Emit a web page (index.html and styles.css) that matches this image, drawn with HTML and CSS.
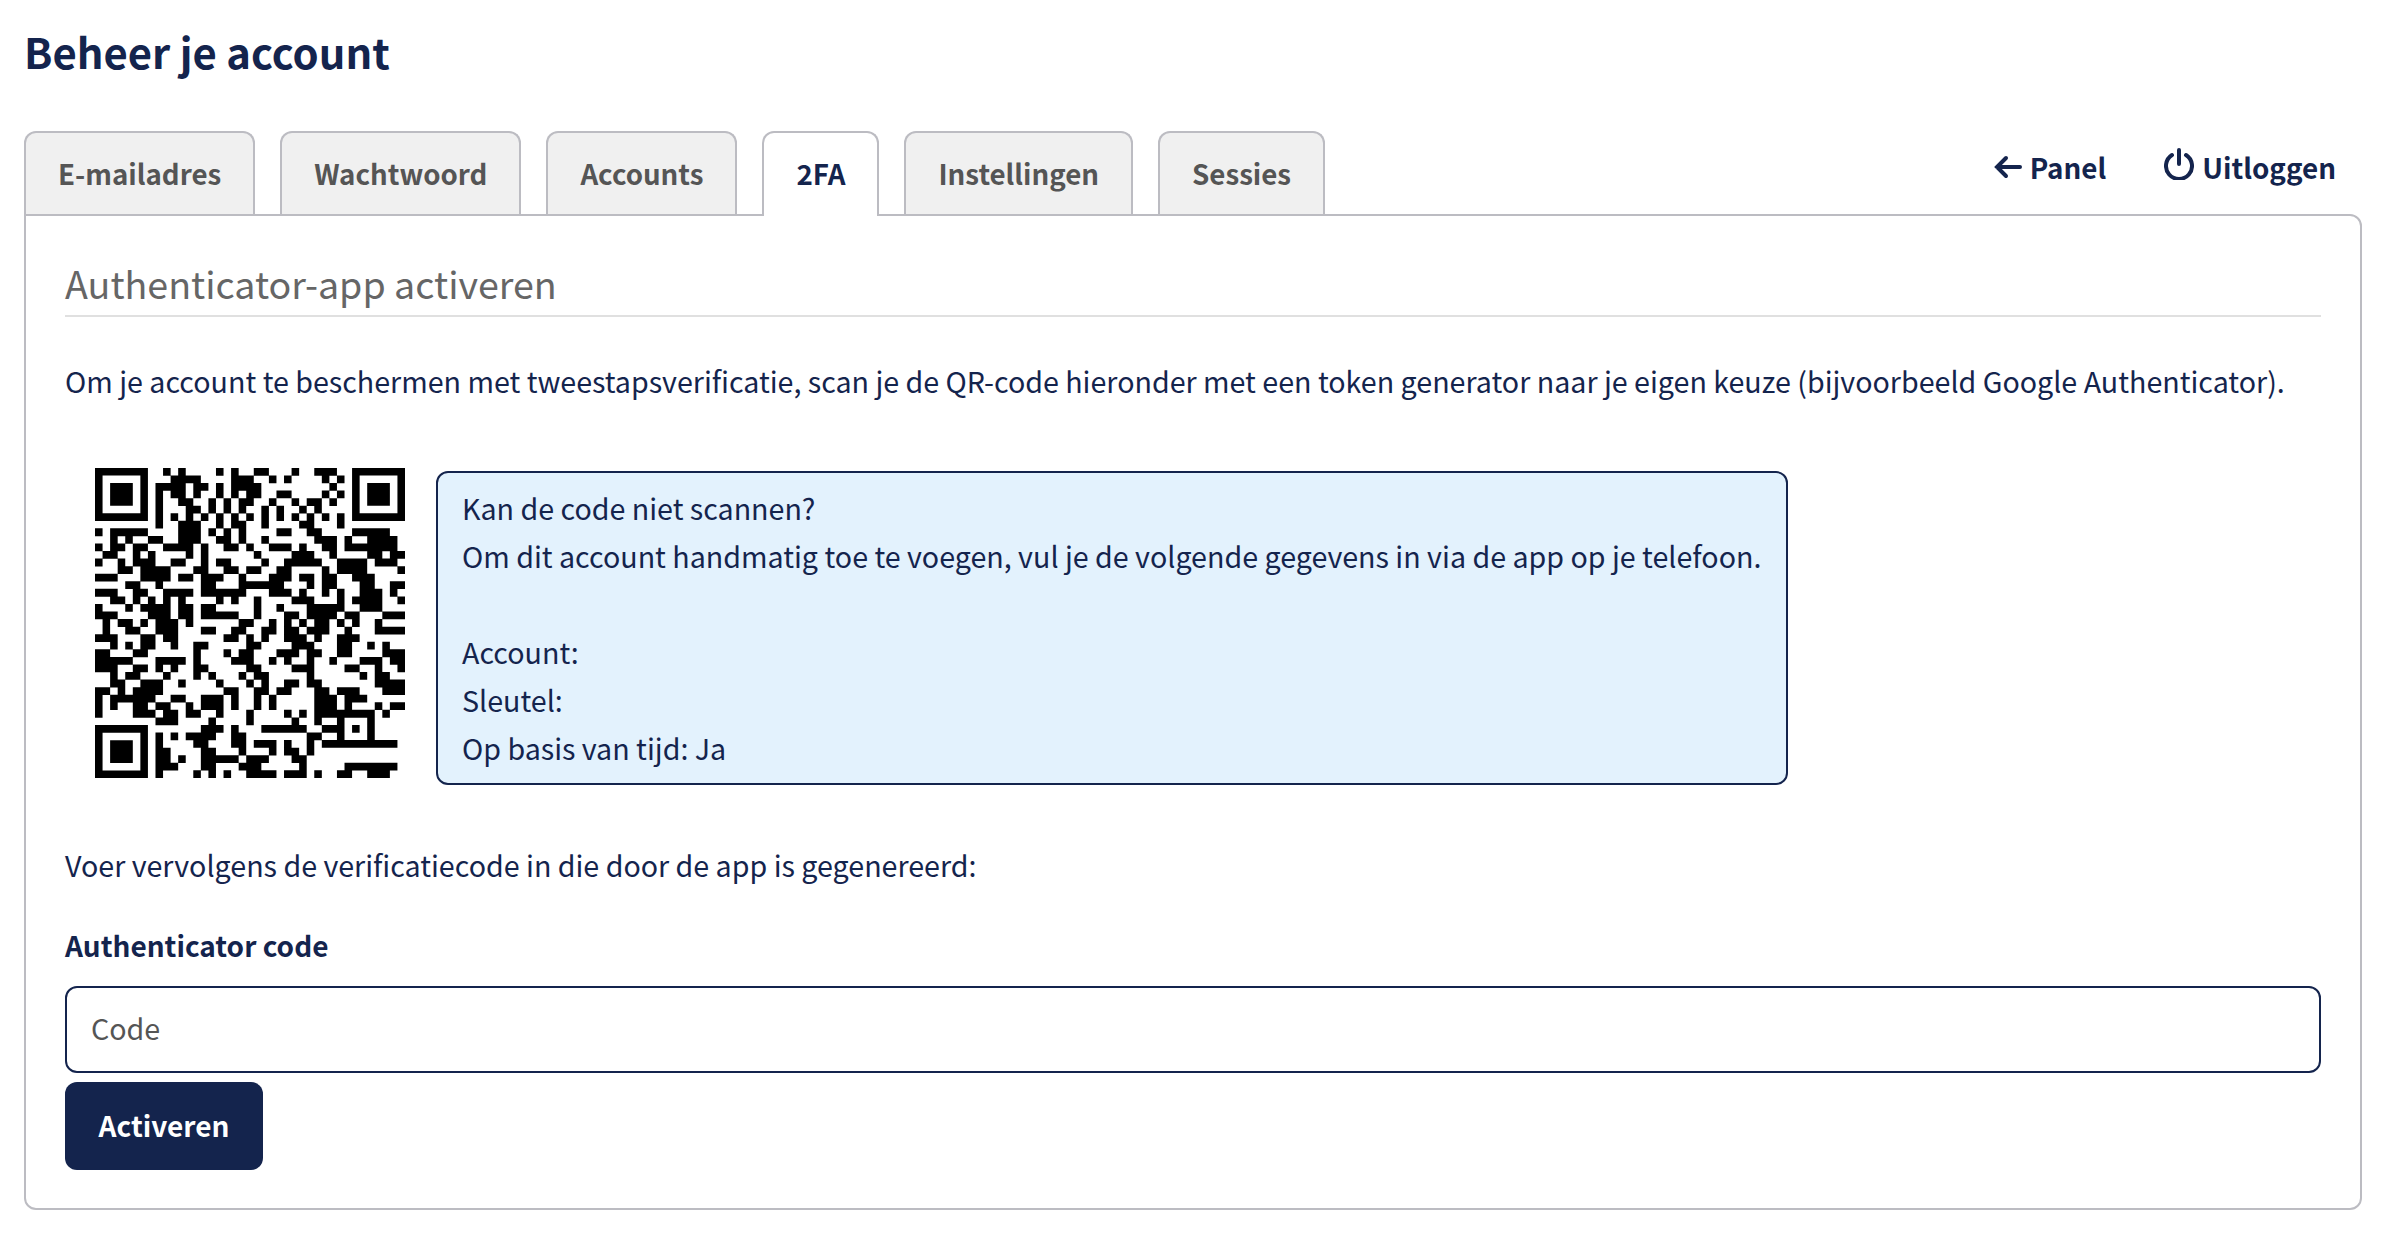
FILE: index.html
```html
<!DOCTYPE html>
<html lang="nl">
<head>
<meta charset="utf-8">
<title>Beheer je account</title>
<link rel="stylesheet" href="styles.css">
</head>
<body>
<h1 class="title">Beheer je account</h1>
<div class="tabbar">
  <nav class="tabs">
    <a class="tab">E-mailadres</a>
    <a class="tab">Wachtwoord</a>
    <a class="tab">Accounts</a>
    <a class="tab active">2FA</a>
    <a class="tab">Instellingen</a>
    <a class="tab">Sessies</a>
  </nav>
  <div class="links">
    <a class="link">
      <svg class="icon" viewBox="0 0 28 24"><path d="M26 12H3M12 3l-9 9 9 9"/></svg>
      Panel
    </a>
    <a class="link">
      <svg class="icon power" viewBox="0 0 30 32"><path d="M15 2v14M8 7a13 13 0 1 0 14 0"/></svg>
      Uitloggen
    </a>
  </div>
</div>
<main class="panel">
  <h2 class="heading">Authenticator-app activeren</h2>
  <p class="intro">Om je account te beschermen met tweestapsverificatie, scan je de QR-code hieronder met een token generator naar je eigen keuze (bijvoorbeeld Google Authenticator).</p>
  <div class="qr-row">
    <svg class="qr" viewBox="0 0 41 41">
      <path class="qr-solid" fill-rule="evenodd" d="M0 0h7v7H0zM1 1v5h5V1zM2 2h3v3H2zM34 0h7v7h-7zM35 1v5h5V1zM36 2h3v3h-3zM0 34h7v7H0zM1 35v5h5v-5zM2 36h3v3H2z"/>
      <path class="qr-runs" d="M9 .5h1M11 .5h1M16 .5h1M18 .5h1M21 .5h2M26 .5h1M29 .5h3
M10 1.5h4M18 1.5h3M23 1.5h1M25 1.5h1M30 1.5h1M32 1.5h1
M8 2.5h4M13 2.5h2M16 2.5h1M18 2.5h4M31 2.5h1
M8 3.5h1M10 3.5h2M13 3.5h1M16 3.5h1M18 3.5h1M20 3.5h2M24 3.5h2M30 3.5h1M32 3.5h1
M8 4.5h1M11 4.5h2M15 4.5h1M17 4.5h1M19 4.5h2M23 4.5h1M26 4.5h1M28 4.5h2M31 4.5h1
M8 5.5h1M12 5.5h2M15 5.5h1M17 5.5h1M19 5.5h1M22 5.5h1M24 5.5h1M27 5.5h1M29 5.5h1
M8 6.5h1M10 6.5h1M12 6.5h1M14 6.5h1M16 6.5h1M18 6.5h1M20 6.5h1M22 6.5h1M24 6.5h1M26 6.5h1M28 6.5h1M30 6.5h1M32 6.5h1
M8 7.5h1M11 7.5h3M16 7.5h1M18 7.5h2M22 7.5h1M27 7.5h2M32 7.5h1
M0 8.5h1M2 8.5h5M11 8.5h3M15 8.5h1M17 8.5h1M19 8.5h1M24 8.5h2M28 8.5h2M34 8.5h5
M2 9.5h1M4 9.5h1M7 9.5h2M11 9.5h3M16 9.5h2M19 9.5h1M22 9.5h1M29 9.5h3M33 9.5h1M36 9.5h4
M0 10.5h1M2 10.5h2M5 10.5h2M9 10.5h4M14 10.5h1M17 10.5h2M20 10.5h1M23 10.5h3M27 10.5h1M30 10.5h2M33 10.5h7
M1 11.5h2M5 11.5h1M7 11.5h1M12 11.5h1M14 11.5h1M21 11.5h1M26 11.5h3M31 11.5h1M36 11.5h2M39 11.5h2
M0 12.5h1M3 12.5h1M5 12.5h3M10 12.5h2M14 12.5h1M16 12.5h2M22 12.5h1M25 12.5h5M32 12.5h4M37 12.5h3
M3 13.5h2M6 13.5h4M13 13.5h2M17 13.5h2M20 13.5h2M24 13.5h2M30 13.5h1M32 13.5h4M40 13.5h1
M0 14.5h3M6 14.5h4M11 14.5h2M14 14.5h3M19 14.5h1M23 14.5h3M27 14.5h2M30 14.5h2M34 14.5h3
M4 15.5h2M8 15.5h1M14 15.5h2M19 15.5h6M28 15.5h1M30 15.5h2M35 15.5h2M39 15.5h2
M0 16.5h3M5 16.5h2M9 16.5h4M14 16.5h6M23 16.5h3M27 16.5h1M30 16.5h1M32 16.5h1M35 16.5h3M39 16.5h1
M2 17.5h2M5 17.5h1M7 17.5h1M9 17.5h1M11 17.5h1M16 17.5h1M18 17.5h1M21 17.5h1M26 17.5h3M32 17.5h1M34 17.5h4M40 17.5h1
M0 18.5h1M4 18.5h1M6 18.5h4M11 18.5h2M14 18.5h2M21 18.5h1M24 18.5h1M28 18.5h4M32 18.5h1M35 18.5h3
M0 19.5h3M7 19.5h3M11 19.5h2M14 19.5h5M21 19.5h1M25 19.5h2M28 19.5h4M33 19.5h2M38 19.5h3
M1 20.5h1M3 20.5h2M6 20.5h1M8 20.5h3M12 20.5h1M19 20.5h2M23 20.5h1M25 20.5h1M27 20.5h1M29 20.5h2M32 20.5h1M34 20.5h1M37 20.5h1
M1 21.5h1M4 21.5h2M8 21.5h3M14 21.5h2M18 21.5h2M22 21.5h2M25 21.5h2M28 21.5h3M33 21.5h1M37 21.5h4
M0 22.5h3M6 22.5h2M9 22.5h2M17 22.5h2M20 22.5h1M22 22.5h1M25 22.5h3M29 22.5h1M32 22.5h3
M2 23.5h1M4 23.5h1M6 23.5h2M10 23.5h1M13 23.5h2M20 23.5h2M26 23.5h3M32 23.5h2M36 23.5h1M38 23.5h1
M0 24.5h2M5 24.5h2M13 24.5h1M17 24.5h1M19 24.5h2M24 24.5h3M28 24.5h2M32 24.5h2M38 24.5h3
M0 25.5h5M8 25.5h4M13 25.5h1M18 25.5h3M23 25.5h1M25 25.5h1M28 25.5h1M31 25.5h1M35 25.5h3M39 25.5h2
M0 26.5h3M5 26.5h2M8 26.5h1M10 26.5h1M13 26.5h2M20 26.5h2M26 26.5h3M33 26.5h2M37 26.5h1M40 26.5h1
M2 27.5h1M4 27.5h2M9 27.5h1M13 27.5h1M15 27.5h1M19 27.5h1M21 27.5h2M28 27.5h1M35 27.5h1M37 27.5h2
M2 28.5h2M6 28.5h3M11 28.5h1M16 28.5h1M20 28.5h1M22 28.5h1M25 28.5h2M28 28.5h2M37 28.5h4
M0 29.5h2M3 29.5h1M5 29.5h4M17 29.5h2M21 29.5h2M24 29.5h2M29 29.5h2M32 29.5h3M38 29.5h3
M0 30.5h1M2 30.5h4M6 30.5h2M10 30.5h2M14 30.5h3M18 30.5h1M21 30.5h1M23 30.5h1M29 30.5h3M33 30.5h3
M0 31.5h1M2 31.5h1M5 31.5h2M8 31.5h2M12 31.5h1M14 31.5h3M18 31.5h1M21 31.5h1M23 31.5h1M29 31.5h3M33 31.5h1M37 31.5h1M39 31.5h2
M0 32.5h1M5 32.5h3M9 32.5h2M12 32.5h2M16 32.5h1M20 32.5h1M25 32.5h1M27 32.5h1M29 32.5h8M38 32.5h1
M8 33.5h3M15 33.5h1M20 33.5h1M26 33.5h1M29 33.5h1M32 33.5h1M36 33.5h1
M14 34.5h3M18 34.5h1M22 34.5h6M30 34.5h3M34 34.5h1M36 34.5h1
M8 35.5h1M10 35.5h1M12 35.5h4M18 35.5h2M28 35.5h2M32 35.5h1M36 35.5h1
M8 36.5h1M13 36.5h2M18 36.5h2M21 36.5h3M25 36.5h1M28 36.5h1M30 36.5h10
M8 37.5h2M14 37.5h2M19 37.5h1M23 37.5h1M25 37.5h2M28 37.5h1
M8 38.5h2M11 38.5h1M14 38.5h5M20 38.5h3M26 38.5h2
M8 39.5h3M14 39.5h2M19 39.5h3M27 39.5h1M33 39.5h7
M8 40.5h1M13 40.5h1M15 40.5h1M17 40.5h1M20 40.5h4M25 40.5h3M29 40.5h1M32 40.5h2M36 40.5h3"/>
    </svg>
    <div class="info">Kan de code niet scannen?<br>Om dit account handmatig toe te voegen, vul je de volgende gegevens in via de app op je telefoon.<br><br>Account:<br>Sleutel:<br>Op basis van tijd: Ja</div>
  </div>
  <p class="next">Voer vervolgens de verificatiecode in die door de app is gegenereerd:</p>
  <label class="label" for="code">Authenticator code</label>
  <input class="input" id="code" type="text" placeholder="Code">
  <button class="button" type="button">Activeren</button>
</main>
</body>
</html>
```
FILE: styles.css
```css
* { box-sizing: border-box; }
html, body { margin: 0; background: #fff; }
body {
  padding: 0 40px 0 24px;
  font-family: "Noto Sans CJK SC", "Source Sans Pro", "Noto Sans", sans-serif;
  font-size: 28.64px;
  line-height: 48px;
  color: #14244d;
}
.title {
  margin: 0;
  padding-top: 22px;
  height: 131px;
  font-size: 41.8px;
  line-height: 58px;
  font-weight: 700;
}
.tabbar { display: flex; justify-content: space-between; height: 83px; }
.tabs { display: flex; gap: 25px; }
.tab {
  height: 85px;
  padding: 0 32px 3px;
  display: flex;
  align-items: center;
  font-size: 27.7px;
  font-weight: 700;
  color: #555;
  background: #f0f0f0;
  border: 2px solid #bcbcc2;
  border-bottom: 0;
  border-radius: 12px 12px 0 0;
}
.tab.active { position: relative; z-index: 1; background: #fff; color: #14244d; }
.links { display: flex; gap: 58px; padding: 11px 26px 0 0; font-size: 27.8px; font-weight: 700; line-height: 40px; height: 60px; }
.link { display: flex; align-items: center; gap: 8px; }
.icon { width: 28px; height: 24px; flex: none; fill: none; stroke: #14244d; stroke-width: 4; stroke-linecap: round; }
.power { width: 30px; height: 32px; margin-top: -6px; }
.panel {
  height: 996px;
  padding: 26px 39px 0;
  border: 2px solid #bcbcc2;
  border-radius: 0 12px 12px 12px;
  position: relative;
}
.heading {
  margin: 0;
  height: 75px;
  padding-top: 10px;
  font-size: 37.6px;
  line-height: 62px;
  font-weight: 400;
  color: #666;
  border-bottom: 2px solid #e0e0e0;
}
.intro { margin: 39.5px 0 0; }
.qr-row { display: flex; align-items: flex-start; margin-top: 66px; }
.qr { width: 310px; height: 310px; margin: -3px 31px 0 30px; flex: none; filter: blur(.6px); }
.qr-solid { fill: #000; }
.qr-runs { fill: none; stroke: #000; stroke-width: 1.03; }
.info {
  width: 1352px;
  padding: 11px 24px;
  white-space: nowrap;
  background: #e3f2fd;
  border: 2px solid #14244d;
  border-radius: 12px;
}
.next { margin: 56px 0 0; }
.label { display: block; margin-top: 32px; font-size: 28px; font-weight: 700; }
.input {
  display: block;
  width: 100%;
  height: 87px;
  margin-top: 17px;
  padding: 0 24px 3px;
  font: inherit;
  color: #14244d;
  border: 2px solid #14244d;
  border-radius: 12px;
  background: #fff;
}
.input::placeholder { color: #555; opacity: 1; }
.button {
  display: block;
  width: 198px;
  height: 88px;
  margin-top: 9px;
  padding-bottom: 2px;
  font: inherit;
  font-size: 28px;
  font-weight: 700;
  color: #fff;
  background: #14244d;
  border: 0;
  border-radius: 12px;
}
```
